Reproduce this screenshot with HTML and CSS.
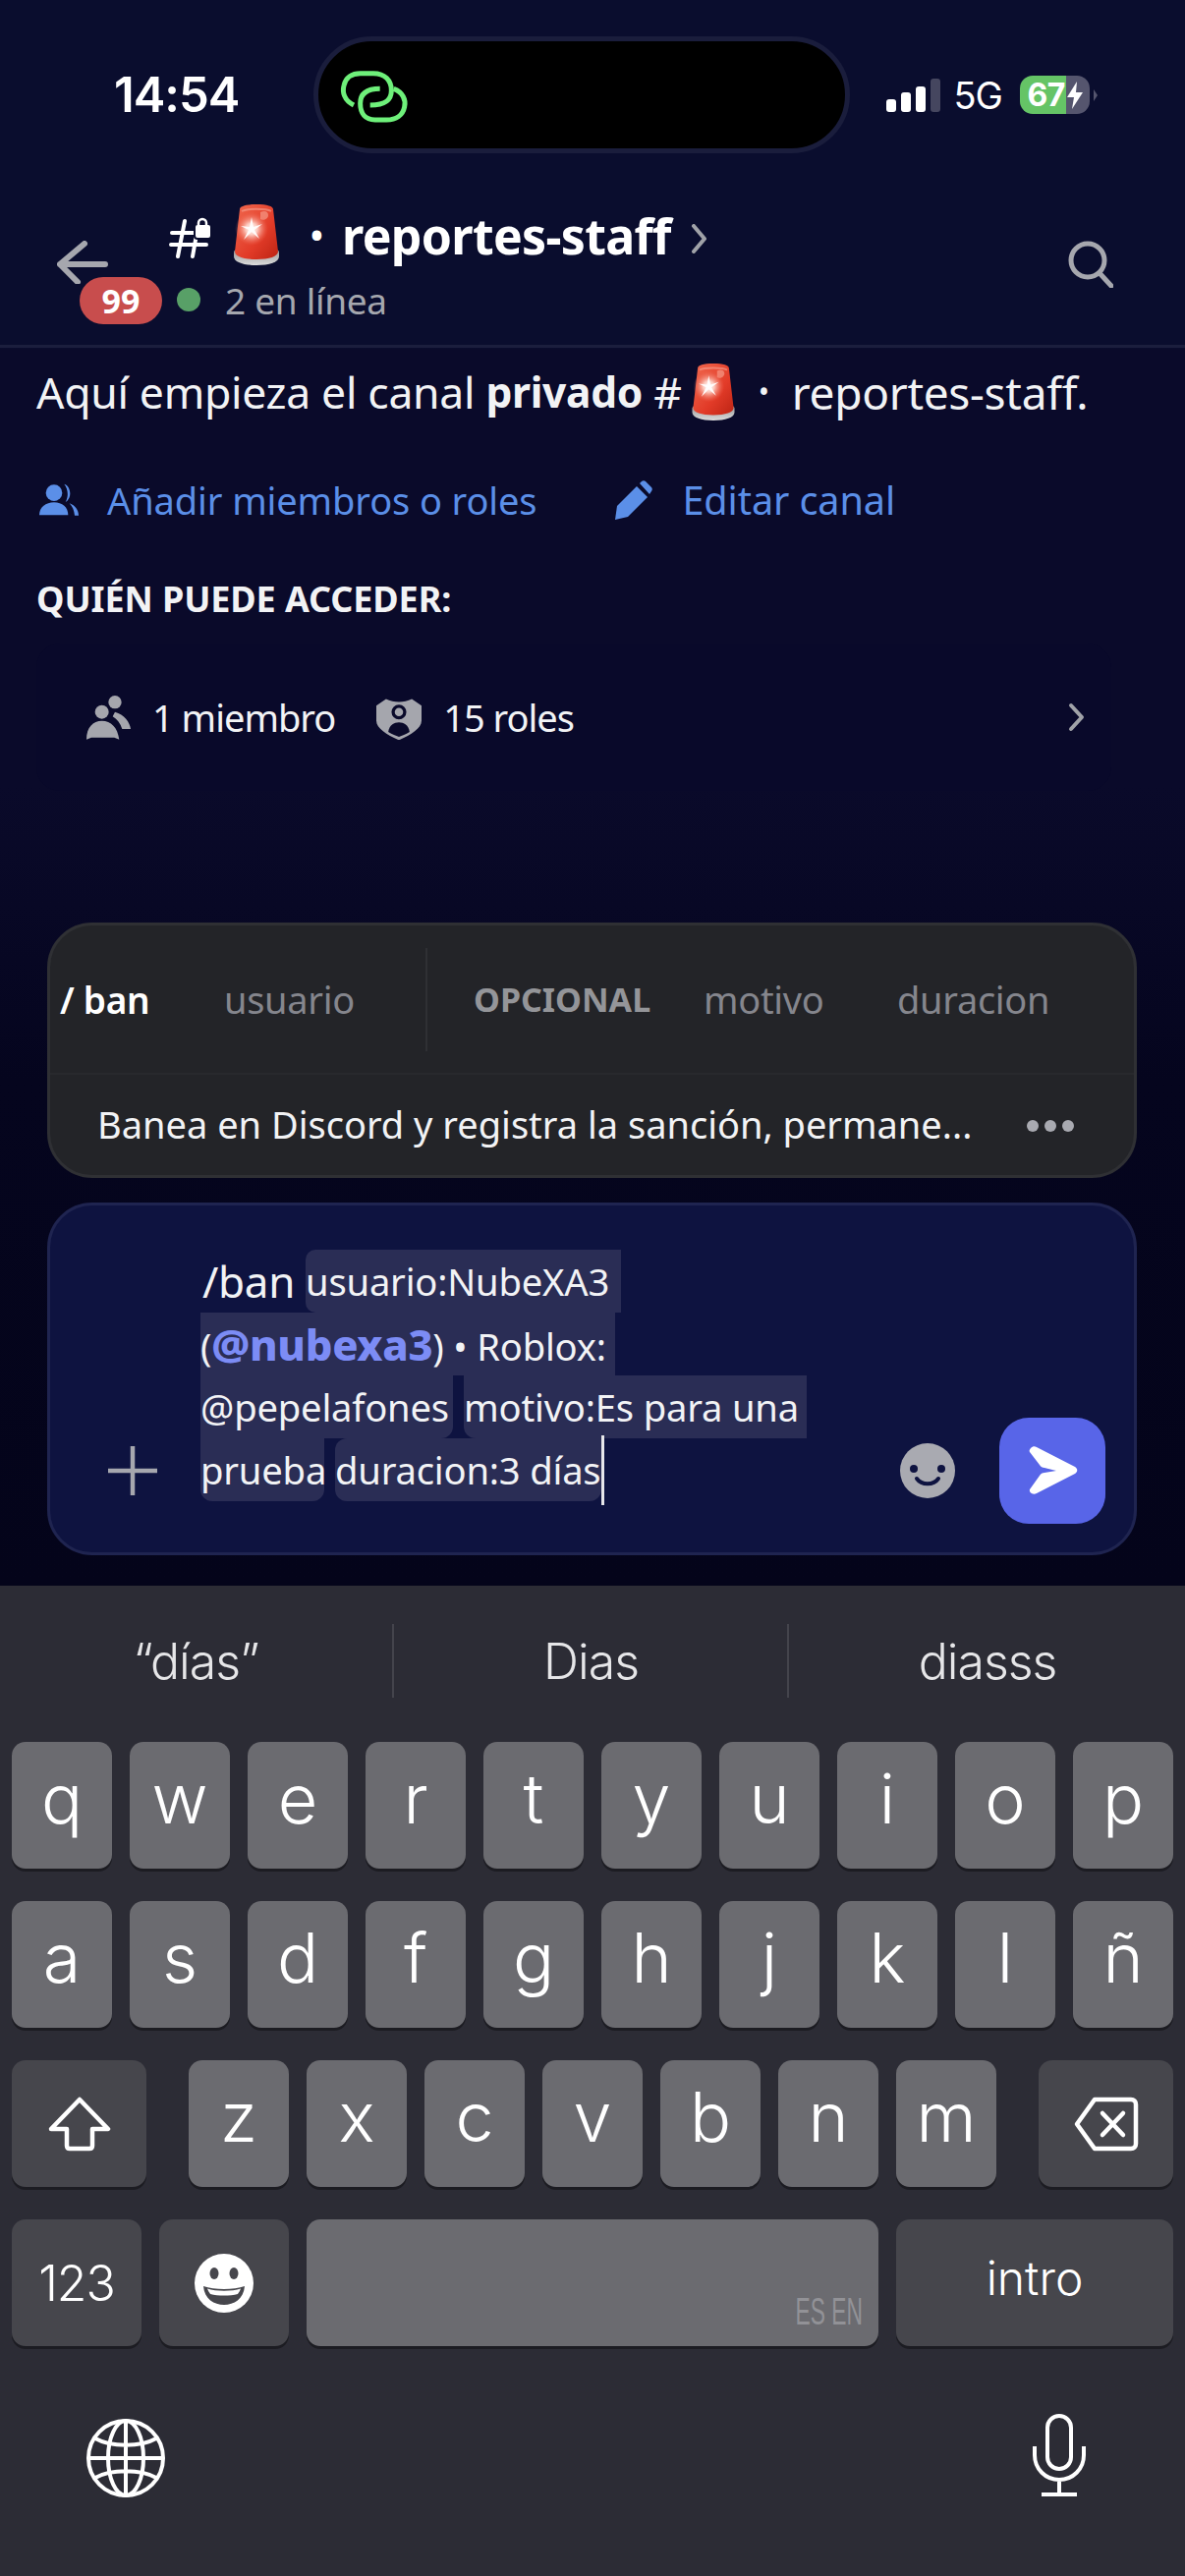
FILE: index.html
```html
<!DOCTYPE html>
<html lang="es">
<head>
<meta charset="utf-8">
<title>reportes-staff</title>
<link rel="stylesheet" href="styles.css">
</head>
<body>
<svg class="defs" width="0" height="0" aria-hidden="true">
  <defs>
    <linearGradient id="sirenRed" x1="0" y1="0" x2="1" y2="1">
      <stop offset="0" stop-color="#f0694f"/>
      <stop offset="0.6" stop-color="#e23b28"/>
      <stop offset="1" stop-color="#bd2414"/>
    </linearGradient>
    <radialGradient id="sirenGlow" cx="0.5" cy="0.5" r="0.5">
      <stop offset="0" stop-color="#fff"/>
      <stop offset="0.35" stop-color="#ffd9cf" stop-opacity="0.9"/>
      <stop offset="1" stop-color="#f26a55" stop-opacity="0"/>
    </radialGradient>
    <linearGradient id="sirenBase" x1="0" y1="0" x2="0" y2="1">
      <stop offset="0" stop-color="#8d8d8d"/>
      <stop offset="1" stop-color="#dcdcdc"/>
    </linearGradient>
    <symbol id="siren" viewBox="0 0 46 62">
      <path d="M0 49C0 46 3 44 23 44S46 46 46 49V53C46 59 36 62 23 62S0 59 0 53Z" fill="url(#sirenBase)"/>
      <path d="M6 5C6 2 12 0 23 0S40 2 40 5L45 48C45 53 36 56 23 56S1 53 1 48Z" fill="url(#sirenRed)"/>
      <path d="M27 8C31 6 35 7 35 11C35 15 30 17 27 15Z" fill="#f59a88" opacity="0.7"/>
      <path d="M8 7C13 4 33 4 38 7" fill="none" stroke="#f7a493" stroke-width="2" opacity="0.6"/>
      <circle cx="18" cy="25" r="17" fill="url(#sirenGlow)"/>
      <path d="M18 13L20 23L29 20L21 26L26 35L18 28L10 36L15 26L7 22L16 23Z" fill="#fff" opacity="0.9"/>
    </symbol>
  </defs>
</svg>

<div class="app">
  <div class="status">
    <div class="time">14:54</div>
    <div class="island">
      <svg class="link-icon" viewBox="0 0 300 210" width="100" height="70">
        <path d="M90 135C60 120 55 95 60 75C65 50 85 38 110 38L150 38C185 38 205 60 205 90C205 118 190 135 140 135" />
        <path d="M212 85C240 95 250 120 245 140C240 165 220 180 190 180L155 180C125 180 110 160 110 130C110 100 130 85 170 85" />
      </svg>
    </div>
    <div class="status-right">
      <div class="signal"><i class="b1"></i><i class="b2"></i><i class="b3"></i><i class="b4"></i></div>
      <span class="net">5G</span>
      <div class="battery"><span class="pct">67</span>
        <svg class="bolt" viewBox="0 0 16 28" width="16" height="28"><path d="M10 0L0 16H7L5 28L16 11H9Z" fill="#fff"/></svg>
      </div>
      <span class="nub"></span>
    </div>
  </div>

  <header class="header">
    <svg class="back" viewBox="0 0 52 44" width="52" height="44"><path d="M28 3L3 24L21 42M3 24H49" /></svg>
    <div class="title-block">
      <div class="title-row">
        <svg class="hash" viewBox="0 0 44 44" width="44" height="44">
          <path class="hash-lines" d="M16 4L9 40M29 12L24 40M3 16H30M2 28H38"/>
          <rect x="26" y="7" width="17" height="15" rx="3" fill="#fff" stroke="#0a0d2e" stroke-width="2"/>
          <path d="M30 8V6A4 4 0 0 1 38 6V8" fill="none" stroke="#fff" stroke-width="2.5"/>
        </svg>
        <svg class="siren-big" width="46" height="62"><use href="#siren"/></svg>
        <span class="dot-sep">•</span>
        <span class="channel">reportes-staff</span>
        <svg class="chev" viewBox="0 0 18 30" width="18" height="30"><path d="M3 2L14 15L3 28"/></svg>
      </div>
      <div class="sub-row"><span class="online"></span><span class="sub-text">2 en línea</span></div>
    </div>
    <svg class="search" viewBox="0 0 46 48" width="46" height="48"><circle cx="20" cy="20" r="17"/><path d="M32 33L44 46"/></svg>
    <span class="badge">99</span>
  </header>

  <main class="main">
    <p class="intro">Aquí empieza el canal <b>privado</b> #<svg class="siren-small" width="44" height="58"><use href="#siren"/></svg><span class="dot-small">•</span><span class="intro-name">reportes-staff.</span></p>
    <div class="actions">
      <svg class="act-icon" viewBox="21 30 129 120" width="43" height="40">
        <circle cx="75" cy="68" r="25"/>
        <path d="M30 136C30 112 50 97 75 97C100 97 118 112 118 136Z"/>
        <path d="M106 41C126 46 132 84 110 96C120 80 118 56 106 41Z"/>
        <path d="M122 100C140 106 150 122 150 137H138C136 122 132 110 122 100Z"/>
      </svg>
      <span class="act-text">Añadir miembros o roles</span>
      <svg class="act-icon pencil" viewBox="0 0 40 40" width="40" height="40">
        <path d="M1 40L3 26L23 6L34 17L14 37Z"/>
        <path d="M26 3L28 1C29 0 31 0 32 1L38 7C39 8 39 10 38 11L36 14Z"/>
      </svg>
      <span class="act-text edit">Editar canal</span>
    </div>
    <div class="access-label">QUIÉN PUEDE ACCEDER:</div>
    <div class="access-card">
      <svg class="card-icon" viewBox="25 28 135 135" width="45" height="45">
        <circle cx="72" cy="78" r="21"/>
        <path d="M25 162C25 125 45 105 72 105C100 105 120 125 125 162L110 156L40 156Z"/>
        <circle cx="112" cy="48" r="20"/>
        <path d="M112 78C140 85 158 110 160 130H134C128 112 118 100 105 92Z"/>
      </svg>
      <span class="card-text">1 miembro</span>
      <svg class="card-icon shield" viewBox="905 28 140 135" width="46" height="45">
        <path d="M905 58L935 38C960 50 990 50 1015 38L1045 58V105C1045 130 1010 150 975 165C940 150 905 130 905 105Z"/>
        <circle cx="975" cy="78" r="18" fill="none" stroke="#0a0a2a" stroke-width="10"/>
        <path d="M942 140C945 118 960 110 975 110S1005 118 1008 140C995 148 985 152 975 155C965 152 955 148 942 140Z" fill="#0a0a2a"/>
      </svg>
      <span class="card-text">15 roles</span>
      <svg class="card-chev" viewBox="0 0 20 30" width="20" height="30"><path d="M4 3L15 15L4 27"/></svg>
    </div>
  </main>

  <section class="slash-panel">
    <div class="slash-top">
      <span class="cmd">/ ban</span>
      <span class="opt o-user">usuario</span>
      <span class="vline"></span>
      <span class="opc">OPCIONAL</span>
      <span class="opt o-mot">motivo</span>
      <span class="opt o-dur">duracion</span>
    </div>
    <div class="slash-bottom">
      <span class="desc">Banea en Discord y registra la sanción, permane...</span>
      <span class="dots"><i></i><i></i><i></i></span>
    </div>
  </section>

  <section class="composer">
    <svg class="plus" viewBox="0 0 50 50" width="50" height="50"><path d="M25 0V50M0 25H50"/></svg>
    <div class="cmd-text">
      <div class="line"><span class="word">/ban</span><span class="seg seg-a"><span class="small">usuario:NubeXA3</span></span></div>
      <div class="line"><span class="seg seg-b"><span class="small">(</span><b class="mention">@nubexa3</b><span class="small">) • Roblox:</span></span></div>
      <div class="line"><span class="seg seg-c"><span class="small">@pepelafones</span></span><span class="seg seg-d"><span class="small">motivo:Es para una</span></span></div>
      <div class="line"><span class="seg seg-e"><span class="small">prueba</span></span><span class="seg seg-f"><span class="small">duracion:3 días</span><i class="caret"></i></span></div>
    </div>
    <svg class="smile" viewBox="0 0 56 56" width="56" height="56">
      <circle cx="28" cy="28" r="28" fill="#a9aab1"/>
      <circle cx="14" cy="26" r="4" fill="#0e1340"/>
      <circle cx="42" cy="26" r="4" fill="#0e1340"/>
      <path d="M17 36C22 43 34 43 39 36" fill="none" stroke="#0e1340" stroke-width="4" stroke-linecap="round"/>
    </svg>
    <button class="send" type="button">
      <svg viewBox="0 0 52 50" width="52" height="50"><path d="M4 2C6 0 8 0 10 1L49 21C52 23 52 26 49 28L10 48C6 50 2 47 3 44L13 30C14 28 16 27 18 27L30 25L18 22C16 22 14 21 13 19L3 6C2 5 3 3 4 2Z" fill="#fff"/></svg>
    </button>
  </section>

  <section class="keyboard">
    <div class="suggest">
      <span class="sug">“días”</span>
      <span class="sug-line"></span>
      <span class="sug">Dias</span>
      <span class="sug-line"></span>
      <span class="sug">diasss</span>
    </div>
    <div class="row">
      <span class="k">q</span><span class="k">w</span><span class="k">e</span><span class="k">r</span><span class="k">t</span><span class="k">y</span><span class="k">u</span><span class="k">i</span><span class="k">o</span><span class="k">p</span>
    </div>
    <div class="row">
      <span class="k">a</span><span class="k">s</span><span class="k">d</span><span class="k">f</span><span class="k">g</span><span class="k">h</span><span class="k">j</span><span class="k">k</span><span class="k">l</span><span class="k">ñ</span>
    </div>
    <div class="row">
      <span class="k fn wide">
        <svg viewBox="0 0 64 56" width="64" height="56"><path d="M32 3L61 33H45V50C45 52 44 53 42 53H22C20 53 19 52 19 50V33H3Z"/></svg>
      </span>
      <span class="k sp-left">z</span><span class="k">x</span><span class="k">c</span><span class="k">v</span><span class="k">b</span><span class="k">n</span><span class="k">m</span>
      <span class="k fn wide sp-left">
        <svg viewBox="0 0 66 56" width="66" height="56"><path d="M21 3H58C61 3 63 5 63 8V48C63 51 61 53 58 53H21L3 28Z"/><path d="M29 17L50 39M50 17L29 39"/></svg>
      </span>
    </div>
    <div class="row">
      <span class="k fn num">123</span>
      <span class="k fn num">
        <svg viewBox="0 0 60 60" width="60" height="60"><circle cx="30" cy="30" r="30" fill="#fff"/><ellipse cx="20" cy="20" rx="4.5" ry="6" fill="#46464c"/><ellipse cx="40" cy="20" rx="4.5" ry="6" fill="#46464c"/><path d="M9 33C20 37 40 37 51 33C50 46 40 52 30 52S10 46 9 33Z" fill="#46464c"/><path d="M13 35.500C22 38.500 38 38.500 47 35.500C46 38 45 39.500 44 41C36 43 24 43 16 41C15 39.500 14 38 13 35.500Z" fill="#fff"/></svg>
      </span>
      <span class="k space"><span class="lang">ES EN</span></span>
      <span class="k fn intro-key">intro</span>
    </div>
    <div class="kb-bottom">
      <svg class="globe" viewBox="0 0 80 80" width="80" height="80">
        <circle cx="40" cy="40" r="38"/><ellipse cx="40" cy="40" rx="18" ry="38"/><path d="M40 2V78M2 40H78M9 20C25 29 55 29 71 20M9 60C25 51 55 51 71 60"/>
      </svg>
      <svg class="mic" viewBox="0 0 56 85" width="56" height="85">
        <rect x="16" y="2" width="24" height="54" rx="12"/><path d="M3 33V42C3 56 14 67 28 67S53 56 53 42V33M28 67V82M10 82H46"/>
      </svg>
    </div>
  </section>
</div>
</body>
</html>
```

FILE: styles.css
```css
* { box-sizing: border-box; }
html, body { margin: 0; padding: 0; }
body { width: 1206px; height: 2622px; overflow: hidden; background: #04041a; font-family: "Noto Sans", "Liberation Sans", sans-serif; color: #f2f3f5; }
.defs { display: block; height: 0; }
.app { width: 1206px; height: 2622px; display: flex; flex-direction: column; background: linear-gradient(180deg, #0a0d2e 0, #0a0d2e 354px, #0a0a2a 355px, #0a0a2a 800px, #05051e 1100px, #04041a 1614px); }

/* status bar */
.status { height: 190px; flex: none; padding-top: 37px; display: flex; align-items: flex-start; }
.time { width: 319px; height: 119px; padding-left: 116px; display: flex; align-items: center; font-family: "Inter", sans-serif; font-weight: 600; font-size: 49px; color: #fff; letter-spacing: -1px; }
.island { width: 546px; height: 119px; border-radius: 60px; background: #000; border: 5px solid #1a1d3c; display: flex; align-items: center; padding-left: 6px; }
.link-icon path { fill: none; stroke: #6ef07a; stroke-width: 15; stroke-linecap: butt; }
.status-right { height: 119px; padding-left: 37px; display: flex; align-items: center; }
.signal { display: flex; align-items: flex-end; gap: 5.5px; height: 34px; }
.signal i { display: block; width: 9.500px; background: #fff; border-radius: 3px; }
.signal .b1 { height: 13px; }
.signal .b2 { height: 20px; }
.signal .b3 { height: 26px; }
.signal .b4 { height: 34px; background: #45465f; }
.net { margin-left: 14px; font-family: "Inter", sans-serif; font-size: 38px; font-weight: 400; color: #fff; width: 53px; letter-spacing: -1px; }
.battery { margin-left: 14px; width: 71px; height: 39px; border-radius: 13px; background: linear-gradient(90deg, #65c466 0, #65c466 47px, #55556e 47px); display: flex; align-items: center; padding-left: 8px; }
.pct { font-family: "Inter", sans-serif; font-weight: 700; font-size: 32px; color: #fff; width: 40px; letter-spacing: -0.5px; }
.nub { width: 0; height: 0; margin-left: 4px; border-left: 4px solid #55556e; border-top: 6px solid transparent; border-bottom: 6px solid transparent; }

/* header */
.header { height: 164px; flex: none; display: flex; align-items: flex-start; padding-left: 58px; border-bottom: 3px solid #1b1e3d; position: relative; }
.back { margin-top: 55px; flex: none; }
.back path { fill: none; stroke: #a6a7ae; stroke-width: 6; stroke-linecap: round; stroke-linejoin: round; }
.title-block { margin-left: 62px; }
.title-row { display: flex; align-items: center; height: 62px; margin-top: 18px; }
.hash-lines { fill: none; stroke: #fff; stroke-width: 4; stroke-linecap: round; }
.hash { margin-top: 8px; flex: none; }
.siren-big { margin-left: 22px; flex: none; }
.dot-sep { margin-left: 32px; font-size: 34px; color: #fff; width: 32px; font-weight: 700; }
.channel { font-size: 50px; font-weight: 700; color: #fff; letter-spacing: -0.7px; line-height: 62px; margin-top: 2px; }
.chev { margin-left: 20px; margin-top: 8px; }
.chev path { fill: none; stroke: #a0a2a8; stroke-width: 4; stroke-linecap: round; stroke-linejoin: round; }
.sub-row { display: flex; align-items: center; margin: 15px 0 0 8px; height: 40px; }
.online { width: 24px; height: 24px; border-radius: 50%; background: #58a067; flex: none; margin-top: 0; }
.sub-text { margin-left: 25px; font-size: 37px; color: #a5a7ae; letter-spacing: -0.3px; }
.search { position: absolute; left: 1087px; top: 55px; }
.search circle, .search path { fill: none; stroke: #a6a7ae; stroke-width: 5; stroke-linecap: round; }
.badge { position: absolute; left: 81px; top: 92px; width: 84px; height: 48px; border-radius: 24px; background: #c84d4d; color: #fff; font-weight: 700; font-size: 34px; line-height: 48px; text-align: center; }

/* intro */
.main { flex: none; height: 585px; padding: 15px 0 0 37px; }
.intro { margin: 0; height: 60px; font-size: 44.5px; line-height: 60px; color: #f2f3f5; display: flex; align-items: center; white-space: pre-wrap; letter-spacing: -0.3px; }
.intro b { font-weight: 700; font-size: 42.5px; }
.siren-small { margin-left: 10px; flex: none; }
.dot-small { margin-left: 24px; width: 34px; font-size: 30px; }
.intro-name { font-size: 46px; }
.actions { margin-top: 55px; height: 50px; display: flex; align-items: center; }
.act-icon { fill: #5b8fe8; flex: none; }
.act-text { margin-left: 29px; font-size: 38px; color: #5b8fe8; letter-spacing: -0.1px; }
.act-text.edit { font-size: 39.6px; }
.pencil { margin-left: 79px; }
.access-label { margin-top: 56px; height: 40px; line-height: 40px; font-weight: 700; font-size: 36px; color: #f2f3f5; letter-spacing: -0.1px; }
.access-card { margin-top: 25px; width: 1094px; height: 150px; border-radius: 24px; background: #09092a; display: flex; align-items: center; padding: 0 25px 0 51px; }
.card-icon { fill: #a5a6ad; flex: none; }
.card-text { margin-left: 22px; font-size: 38px; color: #f2f3f5; letter-spacing: -1px; }
.shield { margin-left: 42px; }
.card-chev { margin-left: auto; }
.card-chev path { fill: none; stroke: #a0a2a8; stroke-width: 4; stroke-linecap: round; stroke-linejoin: round; }

/* slash panel */
.slash-panel { flex: none; margin: 0 49px 0 48px; height: 260px; border-radius: 46px; background: #232428; border: 3px solid #2f3034; }
.slash-top { height: 152px; display: flex; align-items: center; padding-left: 10px; border-bottom: 2px solid #28292d; }
.cmd { font-size: 37px; font-weight: 600; color: #fff; width: 91px; flex: none; white-space: nowrap; letter-spacing: -0.3px; }
.opt { font-size: 38px; color: #85868d; flex: none; letter-spacing: -0.3px; }
.o-user { margin-left: 76px; width: 133px; }
.vline { width: 2px; height: 105px; background: #2f3034; margin-left: 72px; flex: none; }
.opc { margin-left: 47px; font-size: 34px; font-weight: 700; color: #949599; width: 183px; flex: none; }
.o-mot { margin-left: 51px; width: 123px; }
.o-dur { margin-left: 74px; }
.slash-bottom { height: 102px; display: flex; align-items: center; padding: 0 61px 2px 48px; }
.desc { font-size: 38px; color: #f2f3f5; width: 890px; flex: none; white-space: nowrap; letter-spacing: 0; }
.dots { margin-left: auto; display: flex; gap: 6px; padding-top: 4px; }
.dots i { width: 12px; height: 12px; border-radius: 50%; background: #a9aab1; display: block; }

/* composer */
.composer { flex: none; margin: 25px 49px 0 48px; height: 359px; border-radius: 46px; background: #0e1340; border: 3px solid #1f2450; display: flex; align-items: flex-end; padding: 45px 29px 29px 0; }
.plus { margin: 0 0 29px 59px; flex: none; }
.plus path { fill: none; stroke: #a6a7ae; stroke-width: 4.500; }
.cmd-text { margin: 0 0 23px 44px; width: 640px; flex: none; }
.line { height: 64px; display: flex; align-items: stretch; white-space: nowrap; }
.word { font-size: 44px; line-height: 64px; color: #f2f3f5; width: 107px; padding-left: 2px; flex: none; letter-spacing: -0.3px; }
.seg { background: #2a2d55; line-height: 64px; color: #f2f3f5; display: block; position: relative; flex: none; }
.small { font-size: 38.2px; letter-spacing: -0.2px; }
.seg-a { width: 321px; border-radius: 10px 0 0 10px; }
.seg-b { width: 422px; }
.seg-c { width: 257px; border-radius: 0 0 12px 0; }
.seg-d { width: 349px; margin-left: 11px; border-radius: 0 0 0 12px; }
.seg-e { width: 126px; border-radius: 0 0 12px 12px; }
.seg-f { width: 271px; margin-left: 11px; border-radius: 12px 0 12px 12px; }
.mention { font-size: 43.5px; font-weight: 800; color: #7c8cf5; letter-spacing: -0.3px; }
.caret { position: absolute; right: -3px; top: -3px; width: 3px; height: 71px; background: #e6e6ea; }
.smile { margin: 0 45px 26px auto; flex: none; }
.send { width: 108px; height: 108px; flex: none; border: 0; padding: 0; border-radius: 30px; background: #5865e8; display: flex; align-items: center; justify-content: center; }

/* keyboard */
.keyboard { flex: none; margin-top: 31px; height: 1008px; background: #2c2c35; }
.suggest { height: 75px; margin: 39px 0 45px; display: grid; grid-template-columns: 399px 3px 399px 3px 1fr; align-items: center; }
.sug { text-align: center; font-family: "Inter", sans-serif; font-size: 50px; font-weight: 300; color: #e6e6e8; letter-spacing: -1px; }
.sug-line { width: 2px; height: 75px; background: #44444c; }
.row { height: 129px; margin-bottom: 33px; padding: 0 12px; display: flex; gap: 18px; }
.k { width: 102px; height: 129px; flex: none; border-radius: 14px; background: #6b6b70; box-shadow: 0 3px 0 #1c1c22; display: flex; align-items: center; justify-content: center; font-family: "Inter", sans-serif; font-weight: 300; font-size: 70px; color: #fff; padding-bottom: 15px; }
.k svg { display: block; }
.k svg path, .k svg rect { fill: none; stroke: #fff; stroke-width: 4.500; stroke-linejoin: round; stroke-linecap: round; }
.k svg ellipse { stroke: none; }
.fn { background: #46464c; padding-bottom: 0; }
.wide { width: 137px; }
.sp-left { margin-left: 25px; }
.fn.num { width: 132px; font-size: 50px; padding-bottom: 0; letter-spacing: -1px; }
.space { width: 582px; padding: 0 16px 16px 0; align-items: flex-end; justify-content: flex-end; }
.lang { display: block; font-family: "Liberation Sans", sans-serif; font-size: 38px; font-weight: 400; color: #929297; line-height: 38px; transform: scaleX(0.6); transform-origin: right center; white-space: nowrap; }
.intro-key { width: 282px; font-size: 48px; padding-bottom: 10px; }
.kb-bottom { margin-top: 68px; padding: 0 100px 0 88px; display: flex; justify-content: space-between; align-items: flex-end; height: 86px; }
.globe *, .mic * { fill: none; stroke: #fff; stroke-width: 4; }
.k svg path[fill="#46464c"] { fill: #46464c; stroke: none; }
.k svg path[fill="#fff"] { fill: #fff; stroke: none; }
```
